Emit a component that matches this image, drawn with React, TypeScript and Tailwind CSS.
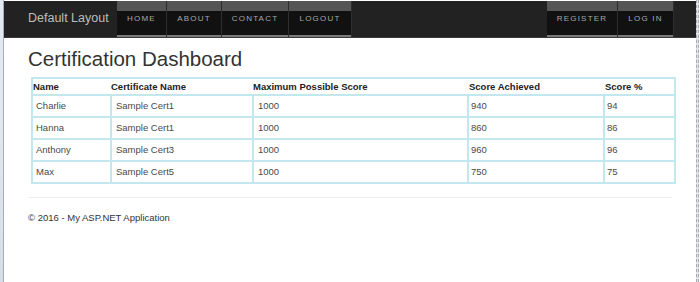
import React from 'react';

const leftNav = [
  { label: 'Home', w: 'w-[50px]' },
  { label: 'About', w: 'w-[55px]' },
  { label: 'Contact', w: 'w-[67px]' },
  { label: 'Logout', w: 'w-[63px]' },
];

const rightNav = [
  { label: 'Register', w: 'w-[71px]' },
  { label: 'Log in', w: 'w-[56px]' },
];

const rows = [
  { name: 'Charlie', cert: 'Sample Cert1', max: '1000', score: '940', pct: '94' },
  { name: 'Hanna', cert: 'Sample Cert1', max: '1000', score: '860', pct: '86' },
  { name: 'Anthony', cert: 'Sample Cert3', max: '1000', score: '960', pct: '96' },
  { name: 'Max', cert: 'Sample Cert5', max: '1000', score: '750', pct: '75' },
];

const NavItem: React.FC<{ label: string; w: string }> = ({ label, w }) => (
  <div className={`${w} h-full flex flex-col border-r border-[#2e2e2e]`}>
    <div className="h-[10px] bg-[#555555]" />
    <div className="flex-1 bg-[#111111] flex items-start justify-center pt-[2px]">
      <span className="text-[8px] leading-[12px] tracking-[1.2px] uppercase text-[#a8a8a8]">{label}</span>
    </div>
    <div className="h-[2px] bg-[#7a7a7a]" />
  </div>
);

export default function App() {
  return (
    <div className="w-[700px] h-[282px] bg-white flex overflow-hidden font-['Liberation_Sans',Arial,sans-serif]">
      {/* left window edge */}
      <div className="w-[3px] h-full bg-gradient-to-b from-[#e4e8f4] via-[#dfe6ee] to-[#d6dde8]" />
      <div className="w-[1px] h-full bg-[#a9adb3]" />

      <div className="w-[692px] h-full flex flex-col">
        <nav className="mt-[1px] h-[37px] bg-[#222222] flex border-b border-[#3a3a3a]">
          <div className="w-[113px] h-full flex items-center pl-[24px] pb-[2px]">
            <span className="text-[12.5px] text-[#bdbdbd] whitespace-nowrap">Default Layout</span>
          </div>
          <div className="flex h-full">
            {leftNav.map((n) => (
              <NavItem key={n.label} {...n} />
            ))}
          </div>
          <div className="flex-1" />
          <div className="flex h-full mr-[22px]">
            {rightNav.map((n) => (
              <NavItem key={n.label} {...n} />
            ))}
          </div>
        </nav>

        <main className="pl-[24px] pr-[20px]">
          <h1 className="mt-[9px] text-[20.5px] leading-[24px] text-[#333333]">Certification Dashboard</h1>

          <table className="mt-[6px] ml-[3px] w-[645px] border-collapse text-[9.5px] leading-[12px]">
            <thead>
              <tr className="h-[17px] border-2 border-[#c2e7ef] text-left text-[#222222] font-bold">
                <th className="w-[79px] pl-0 font-bold">Name</th>
                <th className="w-[142px] pl-0 font-bold">Certificate Name</th>
                <th className="w-[215px] pl-0 font-bold">Maximum Possible Score</th>
                <th className="w-[136px] pl-[1px] font-bold">Score Achieved</th>
                <th className="pl-[1px] font-bold">Score %</th>
              </tr>
            </thead>
            <tbody className="text-[#4a4a4a]">
              {rows.map((r) => (
                <tr key={r.name} className="h-[22px]">
                  <td className="border-2 border-[#c2e7ef] pl-[3px]">{r.name}</td>
                  <td className="border-2 border-[#c2e7ef] pl-[4px]">{r.cert}</td>
                  <td className="border-2 border-[#c2e7ef] pl-[4px]">{r.max}</td>
                  <td className="border-2 border-[#c2e7ef] pl-[2px]">{r.score}</td>
                  <td className="border-2 border-[#c2e7ef] pl-[2px]">{r.pct}</td>
                </tr>
              ))}
            </tbody>
          </table>

          <hr className="mt-[13px] w-[644px] border-0 border-t border-[#eeeeee]" />
          <footer className="mt-[14px] text-[9.5px] leading-[12px] text-[#333333]">© 2016 - My ASP.NET Application</footer>
        </main>
      </div>

      {/* right window edge */}
      <div className="w-[3px] h-full border-x border-dashed border-[#a7abb0] bg-[#dfe3ea]" />
      <div className="flex-1 h-full bg-white" />
    </div>
  );
}
